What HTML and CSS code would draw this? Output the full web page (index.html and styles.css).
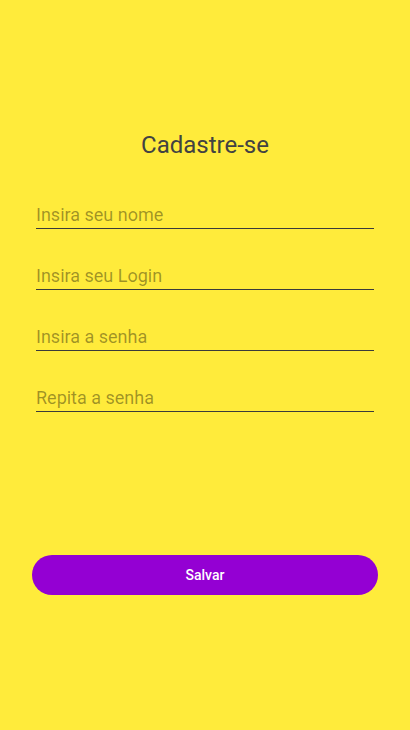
FILE: index.html
```html
<!DOCTYPE html>
<html lang="pt">
<head>
<meta charset="utf-8">
<title>Cadastre-se</title>
<link rel="stylesheet" href="styles.css">
</head>
<body>
<main class="screen">
  <h1 class="title">Cadastre-se</h1>
  <form class="form">
    <input class="field" type="text" placeholder="Insira seu nome">
    <input class="field" type="text" placeholder="Insira seu Login">
    <input class="field" type="password" placeholder="Insira a senha">
    <input class="field" type="password" placeholder="Repita a senha">
  </form>
  <button class="save" type="button">Salvar</button>
</main>
</body>
</html>
```
FILE: styles.css
```css
html, body {
  margin: 0;
  padding: 0;
  background: #ffeb3b;
}
.screen {
  width: 410px;
  height: 730px;
  box-sizing: border-box;
  padding-top: 131px;
  display: flex;
  flex-direction: column;
  font-family: Roboto, "Liberation Sans", sans-serif;
}
.title {
  margin: 0;
  text-align: center;
  font-size: 24px;
  line-height: 28px;
  font-weight: 400;
  color: #424242;
}
.form {
  margin: 30px 36px 0;
  display: flex;
  flex-direction: column;
  gap: 21px;
}
.field {
  display: block;
  width: 100%;
  height: 40px;
  box-sizing: border-box;
  padding: 14px 0 3px;
  margin: 0;
  border: none;
  border-bottom: 1px solid #3a3a3a;
  background: transparent;
  font-family: Roboto, "Liberation Sans", sans-serif;
  font-size: 18px;
  line-height: 22px;
  color: #333;
  outline: none;
}
.field::placeholder {
  color: rgba(0, 0, 0, 0.38);
}
.save {
  margin: 143px 32px 0;
  height: 40px;
  border: none;
  border-radius: 20px;
  background: #9400d3;
  color: #fff;
  font-family: Roboto, "Liberation Sans", sans-serif;
  font-size: 14px;
  font-weight: 500;
}
```
